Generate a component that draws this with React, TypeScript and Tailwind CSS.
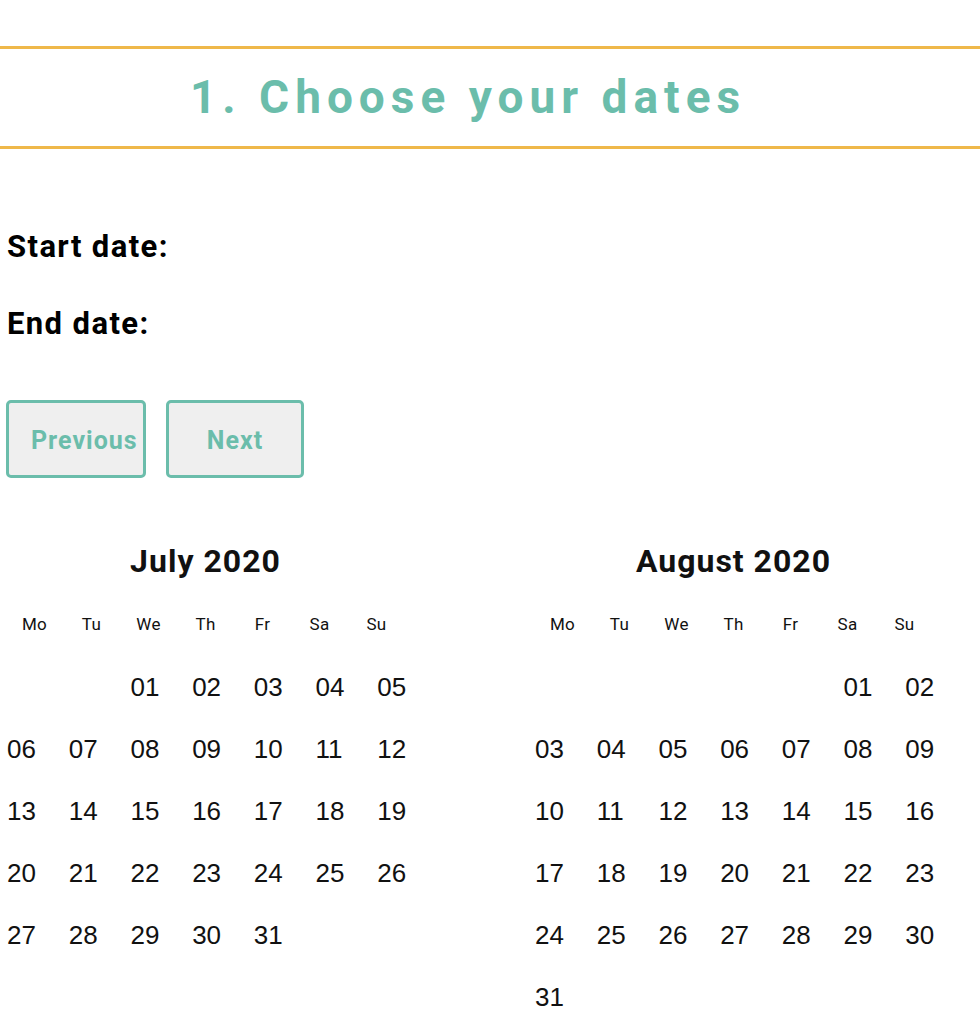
import React from "react";

const teal = "#6bbdab";

function Calendar({ title, offset, days }: { title: string; offset: number; days: number }) {
  const cells: (number | null)[] = [];
  for (let i = 0; i < offset; i++) cells.push(null);
  for (let d = 1; d <= days; d++) cells.push(d);
  const heads = ["Mo", "Tu", "We", "Th", "Fr", "Sa", "Su"];
  return (
    <div className="w-[432px] shrink-0">
      <div className="w-[399px] text-center text-[32px] leading-[36px] font-bold tracking-[1px] text-[#111]">
        {title}
      </div>
      <div className="mt-[33px] grid w-[399px] grid-cols-7 text-[17px] leading-[24px] tracking-[0.3px] text-[#111]">
        {heads.map((h) => (
          <div key={h} className="text-center">
            {h}
          </div>
        ))}
      </div>
      <div
        className="mt-[20px] grid w-[432px] grid-cols-7 text-[26px] text-[#111]"
        style={{ fontFamily: '"Liberation Sans", Arial, sans-serif' }}
      >
        {cells.map((c, i) => (
          <div key={i} className="h-[62px] pl-px leading-[62px]">
            {c === null ? "" : String(c).padStart(2, "0")}
          </div>
        ))}
      </div>
    </div>
  );
}

export default function App() {
  return (
    <div
      className="min-h-[1034px] w-full overflow-hidden bg-white text-black"
      style={{ fontFamily: 'Roboto, "Open Sans", sans-serif' }}
    >
      <div className="h-[46px]" />
      <div className="flex h-[103px] items-center justify-center border-y-[3px] border-[#efb84a] pr-[44px]">
        <h1 className="text-[46px] font-bold tracking-[6px]" style={{ color: teal }}>
          1. Choose your dates
        </h1>
      </div>
      <div className="pl-[7px]">
        <div className="mt-[80px] text-[31px] leading-[36px] font-bold tracking-[1.4px]">Start date:</div>
        <div className="mt-[41px] text-[31px] leading-[36px] font-bold tracking-[1.4px]">End date:</div>
      </div>
      <div className="mt-[58px] flex gap-[20px] pl-[6px]">
        <button className="h-[78px] w-[140px] whitespace-nowrap rounded-[5px] border-[3px] border-[#6bbdab] bg-[#efefef] px-[22px] pt-[4px] text-center text-[25px] font-bold tracking-[1px] text-[#6bbdab]">
          Previous
        </button>
        <button className="h-[78px] w-[138px] whitespace-nowrap rounded-[5px] border-[3px] border-[#6bbdab] bg-[#efefef] px-[22px] pt-[4px] text-center text-[25px] font-bold tracking-[1px] text-[#6bbdab]">
          Next
        </button>
      </div>
      <div className="mt-[65px] flex gap-[96px] pl-[6px]">
        <Calendar title="July 2020" offset={2} days={31} />
        <Calendar title="August 2020" offset={5} days={31} />
      </div>
    </div>
  );
}
